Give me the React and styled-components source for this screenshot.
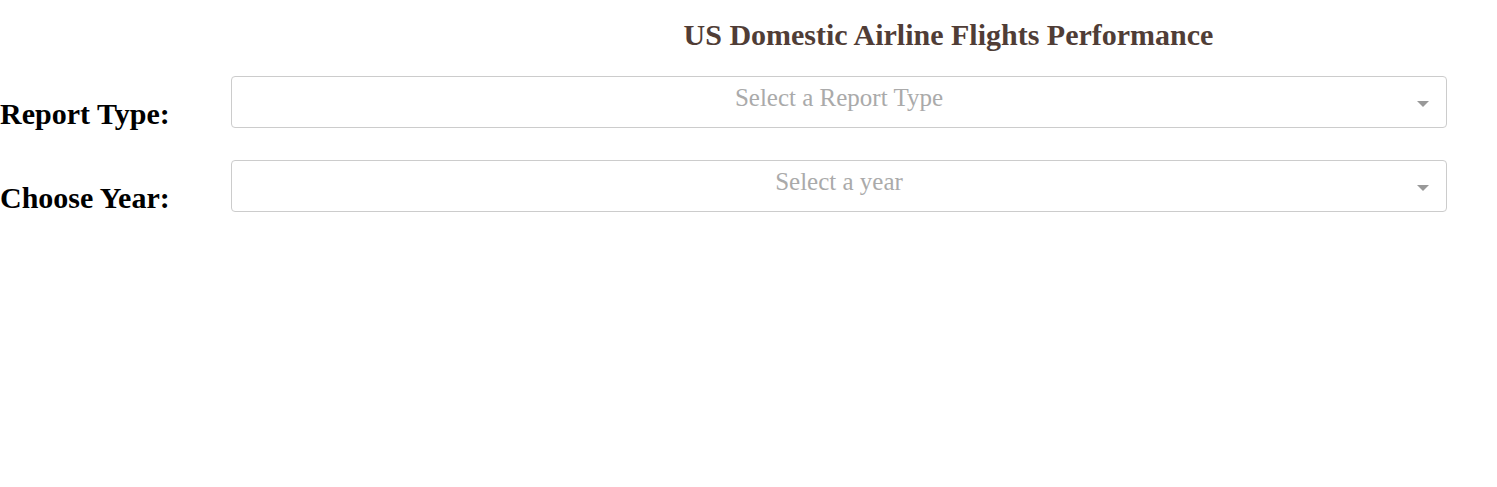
import styled, { createGlobalStyle } from "styled-components";

const GlobalStyle = createGlobalStyle`
  body {
    margin: 0;
    background: #fff;
    font-family: "Liberation Serif", "Times New Roman", serif;
  }
`;

const fields = [
  { label: "Report Type:", placeholder: "Select a Report Type" },
  { label: "Choose Year:", placeholder: "Select a year" },
];

export default function App() {
  return (
    <Page>
      <GlobalStyle />
      <Title>US Domestic Airline Flights Performance</Title>
      <Form>
        {fields.map((field) => (
          <Row key={field.label}>
            <Label>{field.label}</Label>
            <Dropdown>
              <Placeholder>{field.placeholder}</Placeholder>
              <Arrow />
            </Dropdown>
          </Row>
        ))}
      </Form>
    </Page>
  );
}

const Page = styled.div`
  width: 100%;
`;

const Title = styled.h1`
  margin: 0;
  padding: 18px 0 0 400px;
  text-align: center;
  color: #503d36;
  font-size: 30px;
  line-height: 34px;
  font-weight: bold;
`;

const Form = styled.div`
  display: flex;
  flex-direction: column;
  gap: 29px;
  margin-top: 24px;
`;

const Row = styled.div`
  display: flex;
  align-items: flex-start;
`;

const Label = styled.h2`
  margin: 21px 0 0 0;
  width: 231px;
  flex: none;
  font-size: 30px;
  line-height: 34px;
  font-weight: bold;
  color: #000;
`;

const Dropdown = styled.div`
  position: relative;
  box-sizing: border-box;
  width: 1216px;
  height: 52px;
  border: 1px solid #ccc;
  border-radius: 4px;
  background: #fff;
  display: flex;
  align-items: flex-start;
`;

const Placeholder = styled.div`
  flex: 1;
  text-align: center;
  font-size: 25px;
  line-height: 42px;
  color: #aaa;
`;

const Arrow = styled.span`
  position: absolute;
  right: 17px;
  top: 24px;
  width: 0;
  height: 0;
  border-left: 6px solid transparent;
  border-right: 6px solid transparent;
  border-top: 6px solid #999;
`;
